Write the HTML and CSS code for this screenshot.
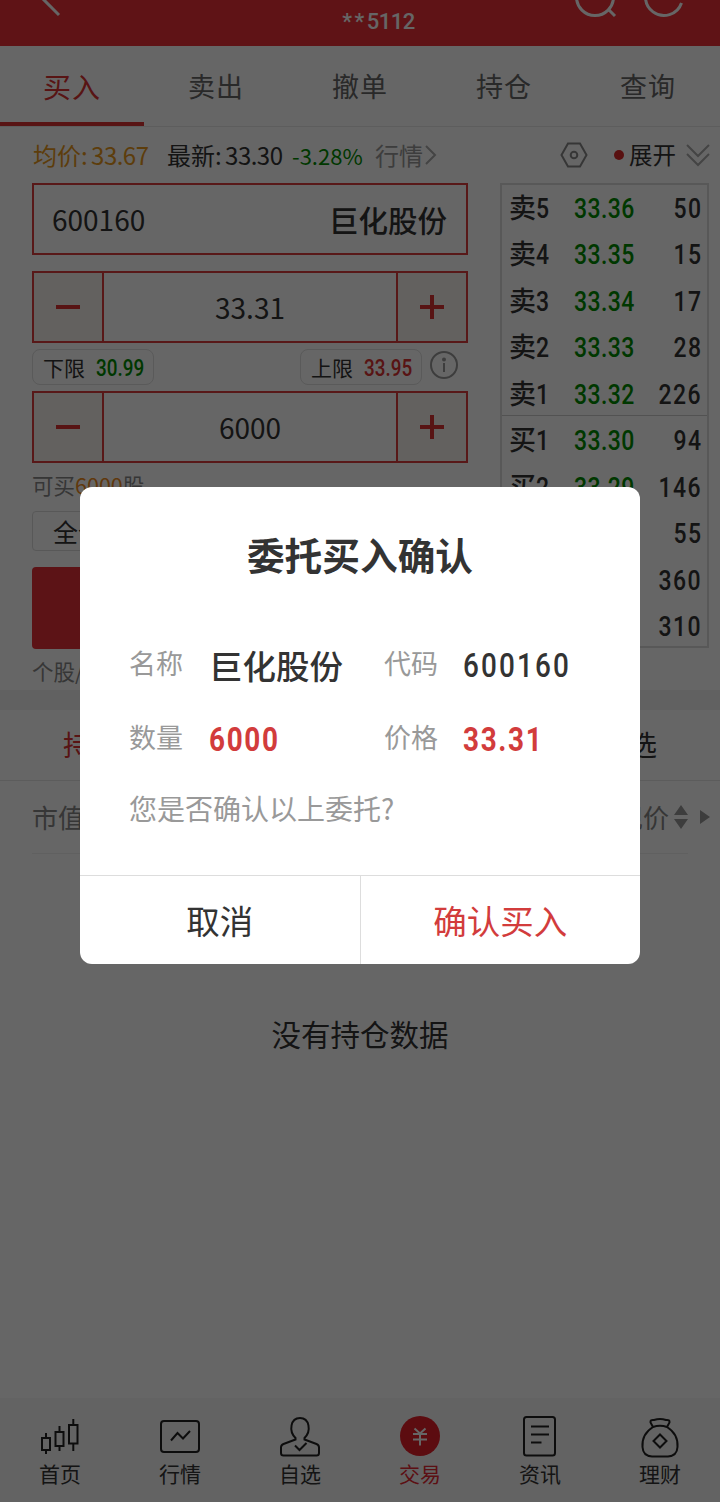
FILE: index.html
```html
<!DOCTYPE html>
<html lang="zh-CN">
  <head>
    <meta charset="utf-8" />
    <title>买入</title>
    <meta name="viewport" content="width=device-width, initial-scale=1.0" />
    <link rel="stylesheet" href="styles.css">
  </head>

  <body>
    <div class="page">
      <div class="header">
        <svg class="back" width="40" height="46" viewBox="0 0 40 46"><path d="M0 -8L23 15" /></svg>
        <div class="account"><span>**</span>5112</div>
        <svg class="tools" width="120" height="46" viewBox="0 0 120 46">
          <circle cx="15" cy="-3" r="18.5" />
          <path d="M28 9L35 16" />
          <path d="M101.500 3A18.500 18.500 0 1 1 101.500 -9" />
        </svg>
      </div>

      <div class="tabs">
        <div class="tab active">买入</div>
        <div class="tab">卖出</div>
        <div class="tab">撤单</div>
        <div class="tab">持仓</div>
        <div class="tab">查询</div>
      </div>

      <div class="info">
        <span class="avg">均价: <b>33.67</b></span>
        <span class="last">最新: <b>33.30</b></span>
        <span class="change">-3.28%</span>
        <span class="quote">行情</span>
        <svg class="arrow" width="12" height="22" viewBox="0 0 12 22"><path d="M1 2L10 11L1 20" /></svg>
        <svg class="hexagon" width="28" height="26" viewBox="0 0 28 26">
          <path d="M8 1.500H20L26.500 13L20 24.500H8L1.500 13Z" />
          <circle cx="14" cy="13" r="3.300" />
        </svg>
        <i class="dot"></i>
        <span class="expand">展开</span>
        <svg class="arrow" width="24" height="24" viewBox="0 0 24 24"><path d="M1 2L12 13L23 2M1 11L12 22L23 11" /></svg>
      </div>

      <div class="trade">
        <div class="form">
          <div class="field stock">
            <span>600160</span>
            <span class="stock-name">巨化股份</span>
          </div>
          <div class="field">
            <div class="step minus"></div>
            <div class="value">33.31</div>
            <div class="step plus"></div>
          </div>
          <div class="limits">
            <div class="limit">下限 <b class="num green">30.99</b></div>
            <div class="limit upper">上限 <b class="num red">33.95</b></div>
            <svg class="tip" width="28" height="28" viewBox="0 0 28 28">
              <circle cx="14" cy="14" r="13" />
              <path d="M14 12V21" />
              <circle class="fill" cx="14" cy="8.500" r="2" />
            </svg>
          </div>
          <div class="field">
            <div class="step minus"></div>
            <div class="value">6000</div>
            <div class="step plus"></div>
          </div>
          <div class="usable">可买<span>6000</span>股</div>
          <div class="portion">全仓</div>
          <div class="buy"></div>
          <div class="note">个股/</div>
        </div>

        <div class="book">
          <div class="level"><span>卖<b class="num">5</b></span><span class="num green">33.36</span><span class="num vol">50</span></div>
          <div class="level"><span>卖<b class="num">4</b></span><span class="num green">33.35</span><span class="num vol">15</span></div>
          <div class="level"><span>卖<b class="num">3</b></span><span class="num green">33.34</span><span class="num vol">17</span></div>
          <div class="level"><span>卖<b class="num">2</b></span><span class="num green">33.33</span><span class="num vol">28</span></div>
          <div class="level last-ask"><span>卖<b class="num">1</b></span><span class="num green">33.32</span><span class="num vol">226</span></div>
          <div class="level"><span>买<b class="num">1</b></span><span class="num green">33.30</span><span class="num vol">94</span></div>
          <div class="level"><span>买<b class="num">2</b></span><span class="num green">33.29</span><span class="num vol">146</span></div>
          <div class="level"><span></span><span></span><span class="num vol">55</span></div>
          <div class="level"><span></span><span></span><span class="num vol">360</span></div>
          <div class="level"><span></span><span></span><span class="num vol">310</span></div>
        </div>
      </div>

      <div class="holding-tabs">
        <span class="red">持仓</span>
        <span>自选</span>
      </div>
      <div class="holding-head">
        <span>市值</span>
        <span class="price">现价</span>
        <svg width="14" height="24" viewBox="0 0 14 24"><path d="M7 0L14 10H0ZM0 14H14L7 24Z" /></svg>
        <svg class="more" width="10" height="14" viewBox="0 0 10 14"><path d="M0 0L10 7L0 14Z" /></svg>
      </div>
      <div class="empty">没有持仓数据</div>

      <div class="navbar">
        <div class="nav">
          <svg width="44" height="44" viewBox="0 0 44 44">
            <path d="M4 22H12V34H4ZM8 17V22M8 34V38M17.500 16H25.500V30H17.500ZM21.500 10V16M21.500 30V35M31 9H39.500V27.500H31ZM35.300 3V9M35.300 27.500V35" />
          </svg>
          首页
        </div>
        <div class="nav">
          <svg width="44" height="44" viewBox="0 0 44 44">
            <rect x="3" y="5" width="38" height="31" rx="3" />
            <path d="M13 24.500L19.500 17L25 22.500L32 15" />
          </svg>
          行情
        </div>
        <div class="nav">
          <svg width="44" height="44" viewBox="0 0 44 44">
            <path d="M17.500 22C10.500 15 12.500 2 22 2S33.500 15 26.500 22V23.500L38.500 28Q41 29 41 31.500V37Q41 39.500 38.500 39.500H5.500Q3 39.500 3 37V31.500Q3 29 5.500 28L17.500 23.500Z" />
            <path d="M17 29.500L21.500 34L28.500 27" />
          </svg>
          自选
        </div>
        <div class="nav current">
          <svg width="44" height="44" viewBox="0 0 44 44">
            <circle cx="22" cy="20" r="20" />
            <path d="M16.500 12.500L22 17.500L27.500 12.500M15 18H29M15 23.500H29M22 18V29.500" />
          </svg>
          交易
        </div>
        <div class="nav">
          <svg width="44" height="44" viewBox="0 0 44 44">
            <rect x="6" y="1" width="31" height="38.500" rx="2.500" />
            <path d="M13 10.500H31M13 18.500H31M13 26.500H23.500" />
          </svg>
          资讯
        </div>
        <div class="nav">
          <svg width="44" height="44" viewBox="0 0 44 44">
            <path d="M15 11L12.500 6.500Q12 3.500 16 4Q22 2 28 4Q32 3.500 31.500 6.500L29 11" />
            <path d="M15 11Q22 8.500 29 11C37 16 40 24 39.500 31Q39 40 30 40.500H14Q5 40 4.500 31C4 24 7 16 15 11Z" />
            <path d="M22 18.500L28.500 25L22 31.500L15.500 25Z" />
          </svg>
          理财
        </div>
      </div>
    </div>

    <div class="mask">
      <div class="dialog">
        <div class="title">委托买入确认</div>
        <div class="details">
          <span class="label">名称</span>
          <span class="detail">巨化股份</span>
          <span class="label">代码</span>
          <span class="detail num">600160</span>
          <span class="label">数量</span>
          <span class="detail num bold">6000</span>
          <span class="label">价格</span>
          <span class="detail num bold">33.31</span>
        </div>
        <div class="question">您是否确认以上委托?</div>
        <div class="buttons">
          <div class="button">取消</div>
          <div class="button confirm">确认买入</div>
        </div>
      </div>
    </div>
  </body>
</html>
```
FILE: styles.css
```css
* {
  box-sizing: border-box;
}
body {
  margin: 0;
  font-family: "Noto Sans CJK SC", sans-serif;
  color: #333;
}
b {
  font-weight: normal;
}
svg {
  display: block;
  flex: none;
  fill: none;
  stroke-width: 2;
  overflow: visible;
}
.page {
  display: flex;
  flex-direction: column;
  width: 720px;
  height: 1502px;
  background: #fff;
  overflow: hidden;
}
/* narrow digits */
.num {
  display: inline-block;
  font-family: Roboto, sans-serif;
  font-weight: 500;
  transform: scaleX(0.82);
  transform-origin: left;
}
.green {
  color: #008c00;
}
.red {
  color: #dc3232;
}

/* header */
.header {
  display: flex;
  justify-content: space-between;
  height: 46px;
  padding: 0 20px 0 36px;
  background: #ed3037;
}
.header svg {
  stroke: #fff;
  stroke-width: 3;
}
.back {
  margin-right: 101px;
}
.account {
  font-family: Roboto, sans-serif;
  font-size: 22px;
  font-weight: 500;
  line-height: 43px;
  letter-spacing: -0.500px;
  color: #fff;
}
.account span {
  letter-spacing: 2.500px;
}

/* tabs */
.tabs {
  display: flex;
  height: 81px;
  border-bottom: 1px solid #e8e8e8;
}
.tab {
  width: 144px;
  height: 80px;
  font-size: 27px;
  letter-spacing: 1px;
  line-height: 80px;
  text-align: center;
  color: #666;
}
.tab.active {
  color: #dc3232;
  border-bottom: 4px solid #dc3232;
  font-size: 28px;
}

.info {
  display: flex;
  align-items: center;
  height: 56px;
  padding: 0 10px 0 33px;
  font-size: 24px;
}
.info span {
  margin-top: -1px;
}
.avg {
  width: 134px;
  color: #e8981c;
}
.last {
  width: 125px;
}
.info b {
  letter-spacing: -0.5px;
}
.avg,
.last {
  white-space: nowrap;
  word-spacing: -2px;
}
.change {
  width: 83px;
  font-size: 22px;
  color: #008c00;
}
.quote {
  width: 50px;
  color: #999;
}
.arrow {
  stroke: #aaa;
}
.hexagon {
  margin-left: auto;
  stroke: #888;
}
.dot {
  width: 10px;
  height: 10px;
  margin: 0 5px 0 26px;
  border-radius: 50%;
  background: #dc2828;
}
.info .expand {
  width: 57px;
  margin-top: -2px;
  font-size: 23.500px;
}

/* order form and order book */
.trade {
  display: flex;
  justify-content: space-between;
  height: 507px;
  padding: 0 11px 0 32px;
}
.form {
  width: 436px;
}
.field {
  display: flex;
  height: 72px;
  border: 2px solid #dc3c3c;
  font-size: 28px;
  line-height: 69px;
}
.stock {
  justify-content: space-between;
  margin-bottom: 16px;
  padding: 0 19px 0 18px;
}
.stock-name {
  font-size: 29.500px;
  font-weight: 500;
}
.step {
  display: flex;
  align-items: center;
  justify-content: center;
  width: 70px;
  background: #f8f2ee;
}
.minus {
  border-right: 2px solid #dc3c3c;
}
.plus {
  border-left: 2px solid #dc3c3c;
}
.step::before {
  content: "";
  width: 24px;
  height: 4px;
  background: #dc3232;
}
.plus::after {
  content: "";
  width: 4px;
  height: 24px;
  margin-left: -14px;
  margin-right: 10px;
  background: #dc3232;
}
.value {
  flex: 1;
  text-align: center;
}
.limits {
  display: flex;
  height: 48px;
  padding-top: 6px;
}
.limit {
  display: flex;
  justify-content: space-between;
  width: 122px;
  height: 36px;
  padding: 0 9px 0 10px;
  border: 1px solid #e0e0e0;
  border-radius: 8px;
  font-size: 21px;
  line-height: 35px;
  white-space: nowrap;
}
.limit .num {
  width: 48px;
  padding-top: 1px;
  font-size: 23px;
}
.upper {
  margin-left: auto;
}
.tip {
  margin: 2px 10px 0 8px;
  stroke: #999;
}
.fill {
  fill: #999;
  stroke: none;
}
.usable {
  height: 48px;
  font-size: 21.500px;
  line-height: 43px;
  color: #888;
}
.usable span {
  color: #f08c1e;
}
.portion {
  width: 92px;
  height: 40px;
  border: 1px solid #ddd;
  border-radius: 4px;
  font-size: 25px;
  line-height: 38px;
  text-align: center;
}
.buy {
  height: 82px;
  margin-top: 16px;
  border-radius: 4px;
  background: #e63037;
}
.note {
  font-size: 21.500px;
  line-height: 44px;
  color: #888;
}
.book {
  width: 209px;
  height: 465px;
  border: 2px solid #ddd;
}
.level {
  display: flex;
  height: 46.500px;
  padding: 0 6px 0 7px;
  font-size: 27px;
  font-weight: 500;
  line-height: 46px;
}
.level:first-child {
  height: 45px;
  line-height: 44px;
}
.level span:first-child {
  width: 65px;
  white-space: nowrap;
}
.level .num {
  font-size: 28px;
  letter-spacing: 0.500px;
}
.level > .num {
  padding-top: 2px;
}
.last-ask {
  border-bottom: 1px solid #ccc;
}
.level .vol {
  margin-left: auto;
  margin-right: -1px;
  letter-spacing: 1.800px;
  transform-origin: right;
}

/* holdings */
.holding-tabs {
  display: flex;
  justify-content: space-between;
  height: 91px;
  padding: 0 63px;
  border-top: 20px solid #f2f2f2;
  border-bottom: 1px solid #e6e6e6;
  font-size: 28px;
  line-height: 69px;
}
.holding-head {
  display: flex;
  align-items: center;
  height: 73px;
  margin: 0 32px;
  border-bottom: 1px solid #efefef;
  font-size: 26px;
  color: #888;
}
.holding-head span {
  margin-top: -1px;
}
.price {
  margin-left: auto;
  margin-right: 5px;
}
.holding-head svg {
  fill: #999;
}
.holding-head .more {
  margin-left: 12px;
  margin-right: -22px;
}
.empty {
  margin-top: 154px;
  font-size: 29.500px;
  line-height: 51px;
  text-align: center;
}

/* bottom navigation */
.navbar {
  display: flex;
  height: 104px;
  margin-top: auto;
  background: #f8f8f8;
}
.nav {
  display: flex;
  flex-direction: column;
  align-items: center;
  width: 120px;
  padding-top: 18px;
  font-size: 21px;
  line-height: 26px;
}
.nav svg {
  stroke: #222;
}
.current {
  color: #e62832;
}
.current svg {
  stroke: #fff;
}
.current circle {
  fill: #e61e28;
  stroke: none;
}

/* confirm dialog */
.mask {
  position: fixed;
  inset: 0;
  display: flex;
  flex-direction: column;
  align-items: center;
  padding-top: 487px;
  background: rgba(0, 0, 0, 0.6);
}
.dialog {
  display: flex;
  flex-direction: column;
  width: 560px;
  height: 477px;
  border-radius: 12px;
  background: #fff;
}
.title {
  padding-top: 37px;
  font-size: 37.700px;
  font-weight: bold;
  line-height: 60px;
  text-align: center;
}
.details {
  display: grid;
  grid-template-columns: 80px 175px 79px 1fr;
  grid-auto-rows: 74px;
  align-items: center;
  margin-top: 43px;
  padding-left: 49px;
}
.label {
  padding-bottom: 4px;
  font-size: 27px;
  color: #999;
}
.detail {
  font-size: 33.500px;
  font-weight: 500;
}
.detail.num {
  padding-top: 2px;
  font-size: 34px;
  letter-spacing: 2.600px;
}
.detail.bold {
  font-weight: bold;
  letter-spacing: 2px;
  color: #d23c3c;
}
.question {
  padding-left: 49px;
  font-size: 28px;
  line-height: 66px;
  color: #999;
}
.buttons {
  display: flex;
  height: 89px;
  margin-top: auto;
  border-top: 1px solid #ddd;
}
.button {
  flex: 1;
  font-size: 33.500px;
  line-height: 88px;
  text-align: center;
}
.confirm {
  border-left: 1px solid #ddd;
  color: #d23c3c;
}
```
